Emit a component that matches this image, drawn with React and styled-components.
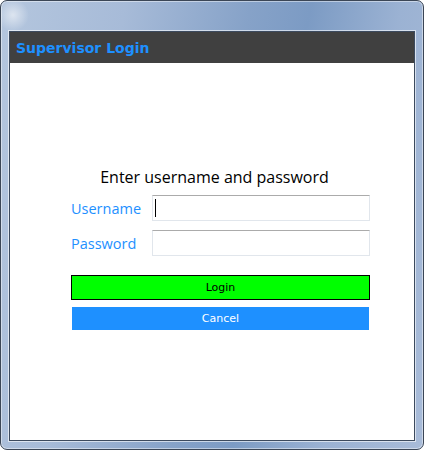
import styled, { createGlobalStyle } from "styled-components";

const GlobalStyle = createGlobalStyle`
  html, body {
    margin: 0;
    padding: 0;
    background: #ffffff;
  }
  * {
    box-sizing: border-box;
  }
`;

const Frame = styled.div`
  width: 424px;
  height: 450px;
  padding: 30px 8px 8px 8px;
  border: 1px solid #3b4656;
  border-radius: 7px;
  background:
    radial-gradient(circle at 12px 14px, rgba(255, 255, 255, 0.55) 0, rgba(255, 255, 255, 0) 16px),
    linear-gradient(
      100deg,
      #b4c6de 0%,
      #a7bbd8 25%,
      #86a2c8 50%,
      #7c9bc4 62%,
      #9bb2d3 80%,
      #a8bbd8 100%
    );
  box-shadow: inset 0 0 0 1px rgba(255, 255, 255, 0.45);
  overflow: hidden;
`;

const Client = styled.div`
  display: flex;
  flex-direction: column;
  height: 100%;
  background: #ffffff;
  border: 1px solid #3c4a5e;
  box-shadow: 0 0 0 1px rgba(255, 255, 255, 0.6);
`;

const TitleBar = styled.div`
  display: flex;
  align-items: center;
  height: 31px;
  padding: 0 6px;
  background: #404040;
  color: #1e90ff;
  font-family: "DejaVu Sans", Verdana, sans-serif;
  font-weight: bold;
  font-size: 14px;
`;

const Body = styled.div`
  flex: 1;
  padding: 104px 0 0 61px;
`;

const Form = styled.form`
  width: 299px;
  display: flex;
  flex-direction: column;
`;

const Heading = styled.div`
  margin: 0 12px 8px 0;
  text-align: center;
  font-family: "Open Sans", "Noto Sans", sans-serif;
  font-size: 16px;
  line-height: 20px;
  color: #000000;
`;

const Row = styled.div`
  display: flex;
  align-items: center;
  margin-bottom: ${(p) => p.$gap || 9}px;
`;

const Label = styled.label`
  width: 81px;
  font-family: "Open Sans", "Noto Sans", sans-serif;
  font-size: 14.5px;
  color: #1e90ff;
`;

const Field = styled.div`
  position: relative;
  width: 218px;
  height: 26px;
`;

const Input = styled.input`
  width: 100%;
  height: 100%;
  padding: 0 3px;
  border: 1px solid #e1e6ec;
  border-top-color: #ababab;
  outline: none;
  font-family: "DejaVu Sans", sans-serif;
  font-size: 13px;
  caret-color: transparent;
`;

const Caret = styled.span`
  position: absolute;
  left: 3px;
  top: 4px;
  width: 1px;
  height: 18px;
  background: #000000;
  pointer-events: none;
`;

const Button = styled.button`
  display: block;
  height: ${(p) => p.$height}px;
  margin: ${(p) => (p.$inset ? "0 1px" : "0")};
  border: ${(p) => (p.$bordered ? "1px solid #000000" : "none")};
  background: ${(p) => p.$bg};
  color: ${(p) => p.$color};
  font-family: "DejaVu Sans", Verdana, sans-serif;
  font-size: 11px;
  padding: 0;
  cursor: pointer;
`;

const Spacer = styled.div`
  height: 7px;
`;

export default function App() {
  return (
    <>
      <GlobalStyle />
      <Frame>
        <Client>
          <TitleBar>Supervisor Login</TitleBar>
          <Body>
            <Form onSubmit={(e) => e.preventDefault()}>
              <Heading>Enter username and password</Heading>
              <Row>
                <Label htmlFor="username">Username</Label>
                <Field>
                  <Input id="username" type="text" />
                  <Caret />
                </Field>
              </Row>
              <Row $gap={19}>
                <Label htmlFor="password">Password</Label>
                <Field>
                  <Input id="password" type="password" />
                </Field>
              </Row>
              <Button type="submit" $height={25} $bordered $bg="#00ff00" $color="#000000">
                Login
              </Button>
              <Spacer />
              <Button type="button" $height={23} $inset $bg="#1e90ff" $color="#ffffff">
                Cancel
              </Button>
            </Form>
          </Body>
        </Client>
      </Frame>
    </>
  );
}
